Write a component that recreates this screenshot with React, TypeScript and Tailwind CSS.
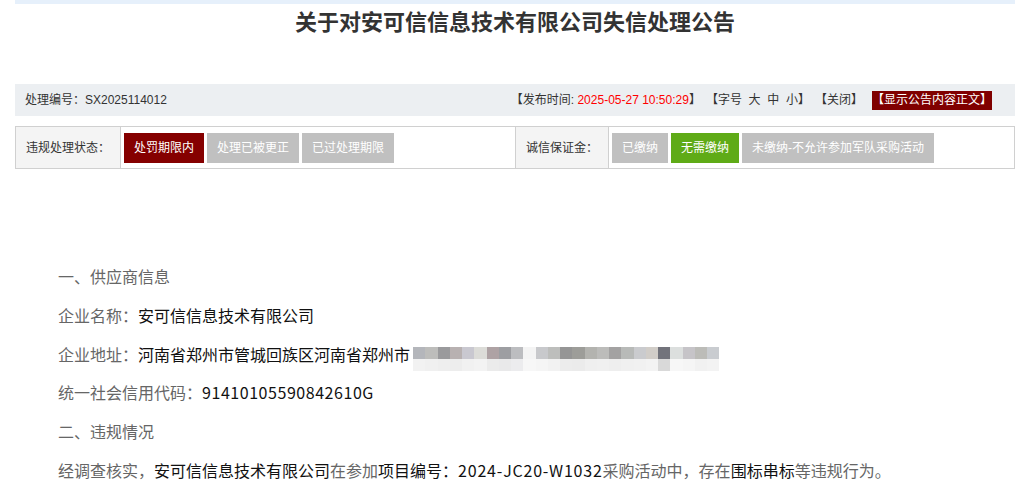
import React from "react";

const mosaicTop = [
  "#b4b6bb", "#bdbdbb", "#9a9a9c", "#b8b1b1", "#c9c8d0", "#dcdcd8", "#aea2a4", "#9d9ea2",
  "#bcbdc0", "#f4f4f4", "#c8c9cc", "#bdbebc", "#959595", "#9d9d99", "#b3b3af", "#bcbcba",
  "#a3a2a2", "#b8bab8", "#cacbce", "#d1cdc8", "#72737b", "#dcdfde", "#c6c4c8", "#bcbcb8",
  "#c9ccd0",
];
const mosaicBottom = [
  "#f2f2f2", "#f0f0f0", "#eeeeee", "#ededed", "#f1f1f1", "#f3f3f3", "#ebebeb", "#e9e9ea",
  "#ececee", "#f7f7f7", "#f5f5f5", "#f2f2f2", "#ececec", "#ebebeb", "#efefef", "#f0f0f0",
  "#eeeeee", "#f0f0f0", "#f1f1f1", "#f3f3f3", "#d9d9d9", "#f7f7f7", "#f5f5f5", "#f1f1f1",
  "#f3f3f3",
];

function Mosaic() {
  return (
    <span className="inline-flex flex-col mt-[10px] ml-[3px]">
      <span className="flex">
        {mosaicTop.map((c, i) => (
          <span key={i} className="w-[12.25px] h-[12px]" style={{ backgroundColor: c }} />
        ))}
      </span>
      <span className="flex">
        {mosaicBottom.map((c, i) => (
          <span key={i} className="w-[12.25px] h-[12px]" style={{ backgroundColor: c }} />
        ))}
      </span>
    </span>
  );
}

function Btn({ text, color }: { text: string; color: string }) {
  return (
    <span className={`h-[30px] px-[10px] flex items-center text-white text-[12px] ${color}`}>
      {text}
    </span>
  );
}

// 方括号在 Noto CJK 里占满一格，比原图宽，收一点
function Item({ children }: { children: React.ReactNode }) {
  return (
    <span className="flex items-center">
      <span className="-ml-[4px]">【</span>
      {children}
      <span className="-mr-[4px]">】</span>
    </span>
  );
}

export default function App() {
  return (
    <div className="bg-white min-h-[500px] font-['Liberation_Sans','Noto_Sans_CJK_SC',sans-serif]">
      <div className="ml-[15px] w-[1000px]">
        <div className="h-[4px] bg-[#e6f0fb]" />
        <h1 className="text-center text-[22px] font-bold text-[#333] leading-[38px]">
          关于对安可信信息技术有限公司失信处理公告
        </h1>

        {/* 编号 + 工具栏 */}
        <div className="mt-[42px] h-[32px] bg-[#eceff2] flex items-center justify-between pl-[10px] pr-[23px] text-[12px] text-[#333]">
          <span>处理编号：SX2025114012</span>
          <div className="flex items-center gap-[13px]">
            <Item>
              发布时间:&nbsp;<span className="text-[#f00]">2025-05-27 10:50:29</span>
            </Item>
            <Item>字号&nbsp; 大&nbsp; 中&nbsp; 小</Item>
            <Item>关闭</Item>
            <span className="h-[19px] flex items-center bg-[#800000] text-white">【显示公告内容正文】</span>
          </div>
        </div>

        {/* 状态表 */}
        <div className="mt-[10px] h-[43px] flex border border-[#d0d0d0] text-[12px]">
          <div className="w-[105px] bg-[#f4f4f4] border-r border-[#d0d0d0] flex items-center pl-[10px] text-[#333]">
            违规处理状态：
          </div>
          <div className="w-[394px] flex items-center pl-[3px] gap-[3px]">
            <Btn text="处罚期限内" color="bg-[#850000]" />
            <Btn text="处理已被更正" color="bg-[#c0c0c0]" />
            <Btn text="已过处理期限" color="bg-[#c0c0c0]" />
          </div>
          <div className="w-[94px] bg-[#f4f4f4] border-x border-[#d0d0d0] flex items-center pl-[10px] text-[#333]">
            诚信保证金：
          </div>
          <div className="flex-1 flex items-center pl-[3px] gap-[3px]">
            <Btn text="已缴纳" color="bg-[#c0c0c0]" />
            <Btn text="无需缴纳" color="bg-[#5fab17]" />
            <Btn text="未缴纳-不允许参加军队采购活动" color="bg-[#c0c0c0]" />
          </div>
        </div>

        {/* 正文 */}
        <div className="mt-[88px] pl-[43px] text-[16px] leading-[38.8px] text-[#666] font-['Liberation_Sans_Narrow','Arial_Narrow','Noto_Sans_CJK_SC',sans-serif]">
          <div>一、供应商信息</div>
          <div>
            企业名称：<span className="text-[#111]">安可信信息技术有限公司</span>
          </div>
          <div className="flex items-center">
            企业地址：<span className="text-[#111]">河南省郑州市管城回族区河南省郑州市</span>
            <Mosaic />
          </div>
          <div>
            统一社会信用代码：<span className="text-[#111] tracking-[0.55px]">91410105590842610G</span>
          </div>
          <div>二、违规情况</div>
          <div>
            经调查核实，<span className="text-[#111]">安可信信息技术有限公司</span>在参加
            <span className="text-[#111]">
              项目编号：<span className="tracking-[0.8px]">2024-JC20-W1032</span>
            </span>
            采购活动中，存在
            <span className="text-[#111]">围标串标</span>等违规行为。
          </div>
        </div>
      </div>
    </div>
  );
}
